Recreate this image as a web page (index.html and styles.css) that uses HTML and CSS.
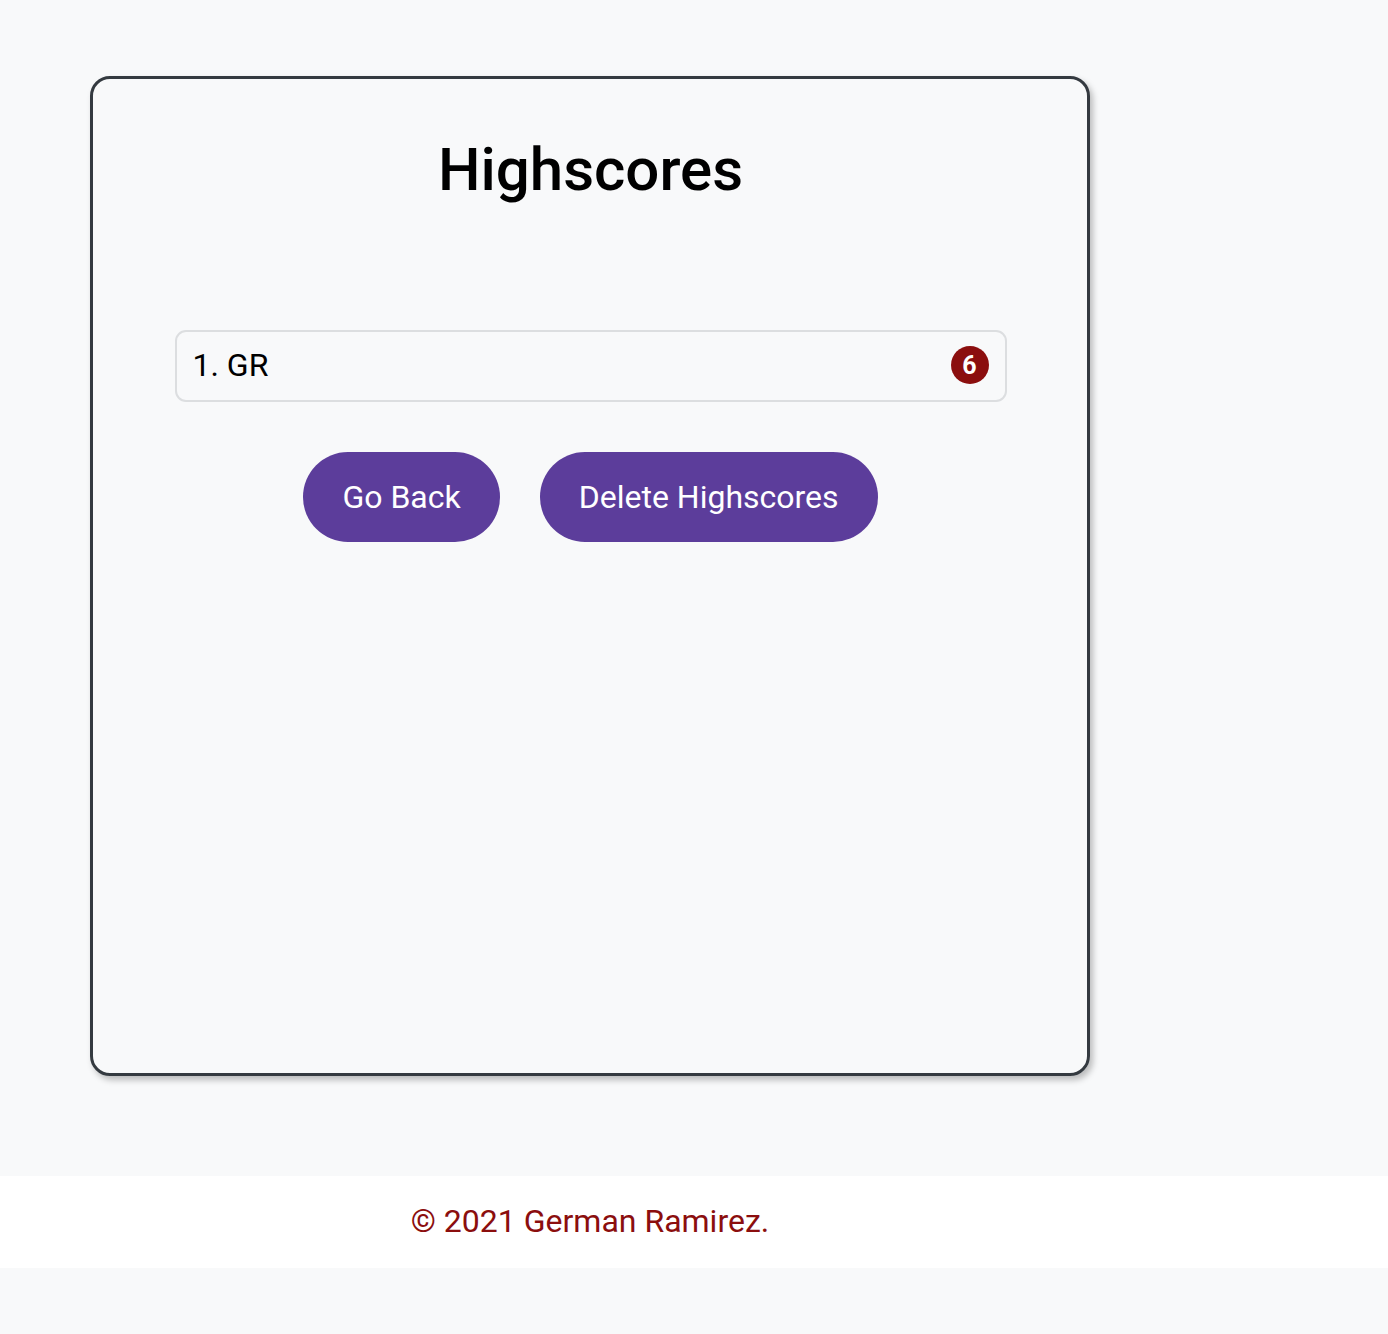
FILE: index.html
```html
<!DOCTYPE html>
<html lang="en">
<head>
<meta charset="utf-8">
<title>Highscores</title>
<link rel="stylesheet" href="styles.css">
</head>
<body>
<main class="page">
  <section class="card">
    <h1 class="title">Highscores</h1>
    <ol class="scores">
      <li class="score-item">
        <span class="score-name">1. GR</span>
        <span class="badge">6</span>
      </li>
    </ol>
    <div class="actions">
      <button class="btn">Go Back</button>
      <button class="btn">Delete Highscores</button>
    </div>
  </section>
</main>
<footer class="footer">
  <div class="footer-inner">© 2021 German Ramirez.</div>
</footer>
</body>
</html>
```
FILE: styles.css
```css
html, body {
  margin: 0;
  padding: 0;
  background: #f8f9fa;
  font-family: Roboto, "Liberation Sans", sans-serif;
  color: #000;
}
.page {
  padding: 76px 0 0 90px;
}
.card {
  box-sizing: border-box;
  width: 1000px;
  height: 1000px;
  border: 3px solid #343a40;
  border-radius: 20px;
  box-shadow: 3px 4px 6px rgba(0, 0, 0, 0.25);
  padding: 55px 80px 0 81px;
  display: flex;
  flex-direction: column;
  align-items: center;
}
.title {
  margin: 0;
  font-size: 60px;
  font-weight: 500;
  line-height: 72px;
  text-align: center;
}
.scores {
  list-style: none;
  margin: 124px 0 0 0;
  padding: 0;
  width: 832px;
}
.score-item {
  box-sizing: border-box;
  height: 72px;
  border: 2px solid #dcdee0;
  border-radius: 11px;
  display: flex;
  align-items: center;
  justify-content: space-between;
  padding: 0 16px 2px 16px;
  font-size: 32px;
}
.badge {
  width: 38px;
  height: 38px;
  border-radius: 50%;
  background: #8b0e0e;
  color: #fff;
  font-weight: 700;
  font-size: 25px;
  display: flex;
  align-items: center;
  justify-content: center;
}
.actions {
  margin-top: 50px;
  display: flex;
  gap: 40px;
  justify-content: center;
}
.btn {
  height: 90px;
  padding: 0 39px;
  border: none;
  border-radius: 45px;
  background: #5c3d9b;
  color: #fff;
  font-family: Roboto, "Liberation Sans", sans-serif;
  font-size: 32px;
}
.footer {
  margin-top: 100px;
  background: #fff;
  height: 92px;
  display: flex;
  align-items: center;
  padding-bottom: 2px;
  box-sizing: border-box;
}
.footer-inner {
  width: 1000px;
  margin-left: 90px;
  text-align: center;
  color: #8b0e0e;
  font-size: 32px;
}
```
